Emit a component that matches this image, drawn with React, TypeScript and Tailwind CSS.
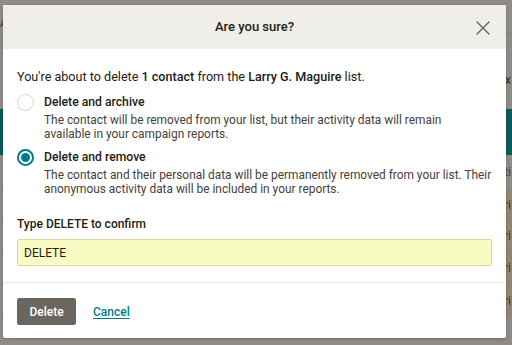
import { X } from 'lucide-react';

const rows = [
  { h: 'h-[35px]', tan: false, txt: 'ti' },
  { h: 'h-[31px]', tan: true, txt: 'ri' },
  { h: 'h-[31px]', tan: true, txt: 'ri' },
  { h: 'h-[33px]', tan: true, txt: 'ri' },
  { h: 'h-[32px]', tan: true, txt: 'ri' },
];

function Radio({ checked }: { checked: boolean }) {
  return checked ? (
    <span className="flex h-[17px] w-[17px] shrink-0 items-center justify-center rounded-full border-2 border-[#007c89] bg-white">
      <span className="h-[9px] w-[9px] rounded-full bg-[#007c89]" />
    </span>
  ) : (
    <span className="h-[17px] w-[17px] shrink-0 rounded-full border border-[#d3d3d1] bg-white" />
  );
}

export default function App() {
  return (
    <div className="relative h-[345px] w-[512px] overflow-hidden bg-[#8f8b86] font-['Roboto',sans-serif] text-[#241c15]">
      {/* Dimmed page behind */}
      <div className="flex h-full flex-col">
        <div className="h-[33px] border-b border-[#85817c] pt-[14px] text-[12px] text-[#3e3a36]">A</div>
        <div className="h-[12px] border-b border-[#85817c]" />
        <div className="flex h-[64px] justify-end pr-[1px] pt-[26px] text-[12px] text-[#2c2926]">x</div>
        <div className="h-[46px] bg-[#0c5b5a]" />
        {rows.map((r, i) => (
          <div key={i} className={`flex ${r.h} justify-end border-b border-[#85817c]`}>
            <div className={`flex w-[8px] items-center text-[12px] text-[#3e3a36] ${r.tan ? 'bg-[#8f8570]' : ''}`}>{r.txt}</div>
          </div>
        ))}
      </div>

      {/* Modal */}
      <div className="absolute left-[3px] top-[5px] flex w-[503px] flex-col rounded-[2px] bg-white shadow-[0_1px_3px_rgba(0,0,0,0.2)]">
        <div className="relative flex h-[44px] items-center justify-center bg-[#efeeea]">
          <span className="text-[13px] font-medium">Are you sure?</span>
          <X className="absolute right-[11px] top-[11px] h-[24px] w-[24px] text-[#6b6762]" strokeWidth={1.4} />
        </div>

        <div className="px-[14px] pt-[19px]">
          <p className="text-[12.6px] leading-[18px]">
            You're about to delete <span className="font-medium">1 contact</span> from the{' '}
            <span className="font-medium">Larry G. Maguire</span> list.
          </p>

          <div className="mt-[8px] flex gap-[10px]">
            <Radio checked={false} />
            <div>
              <div className="text-[12.2px] font-medium leading-[17px]">Delete and archive</div>
              <div className="mt-[3px] whitespace-nowrap text-[11.9px] leading-[13.5px] text-[#46413c]">
                The contact will be removed from your list, but their activity data will remain
                <br />
                available in your campaign reports.
              </div>
            </div>
          </div>

          <div className="mt-[8px] flex gap-[10px]">
            <Radio checked />
            <div>
              <div className="text-[12.2px] font-medium leading-[17px]">Delete and remove</div>
              <div className="mt-[3px] whitespace-nowrap text-[11.9px] leading-[13.5px] text-[#46413c]">
                The contact and their personal data will be permanently removed from your list. Their
                <br />
                anonymous activity data will be included in your reports.
              </div>
            </div>
          </div>

          <div className="mt-[20px] text-[12px] font-medium leading-[17px]">Type DELETE to confirm</div>
          <div className="mt-[6px] flex h-[27px] items-center rounded-[2px] border border-[#d6d8a4] bg-[#f9fcc2] px-[6px] text-[12px]">
            DELETE
          </div>
        </div>

        <div className="mt-[16px] border-t border-[#ebebea]" />

        <div className="flex items-center gap-[17px] px-[14px] pb-[13px] pt-[15px]">
          <button className="h-[27px] w-[59px] rounded-[2px] bg-[#6c6661] text-[12px] font-medium text-white">Delete</button>
          <a className="text-[12px] font-medium text-[#007c89] underline underline-offset-2">Cancel</a>
        </div>
      </div>
    </div>
  );
}
